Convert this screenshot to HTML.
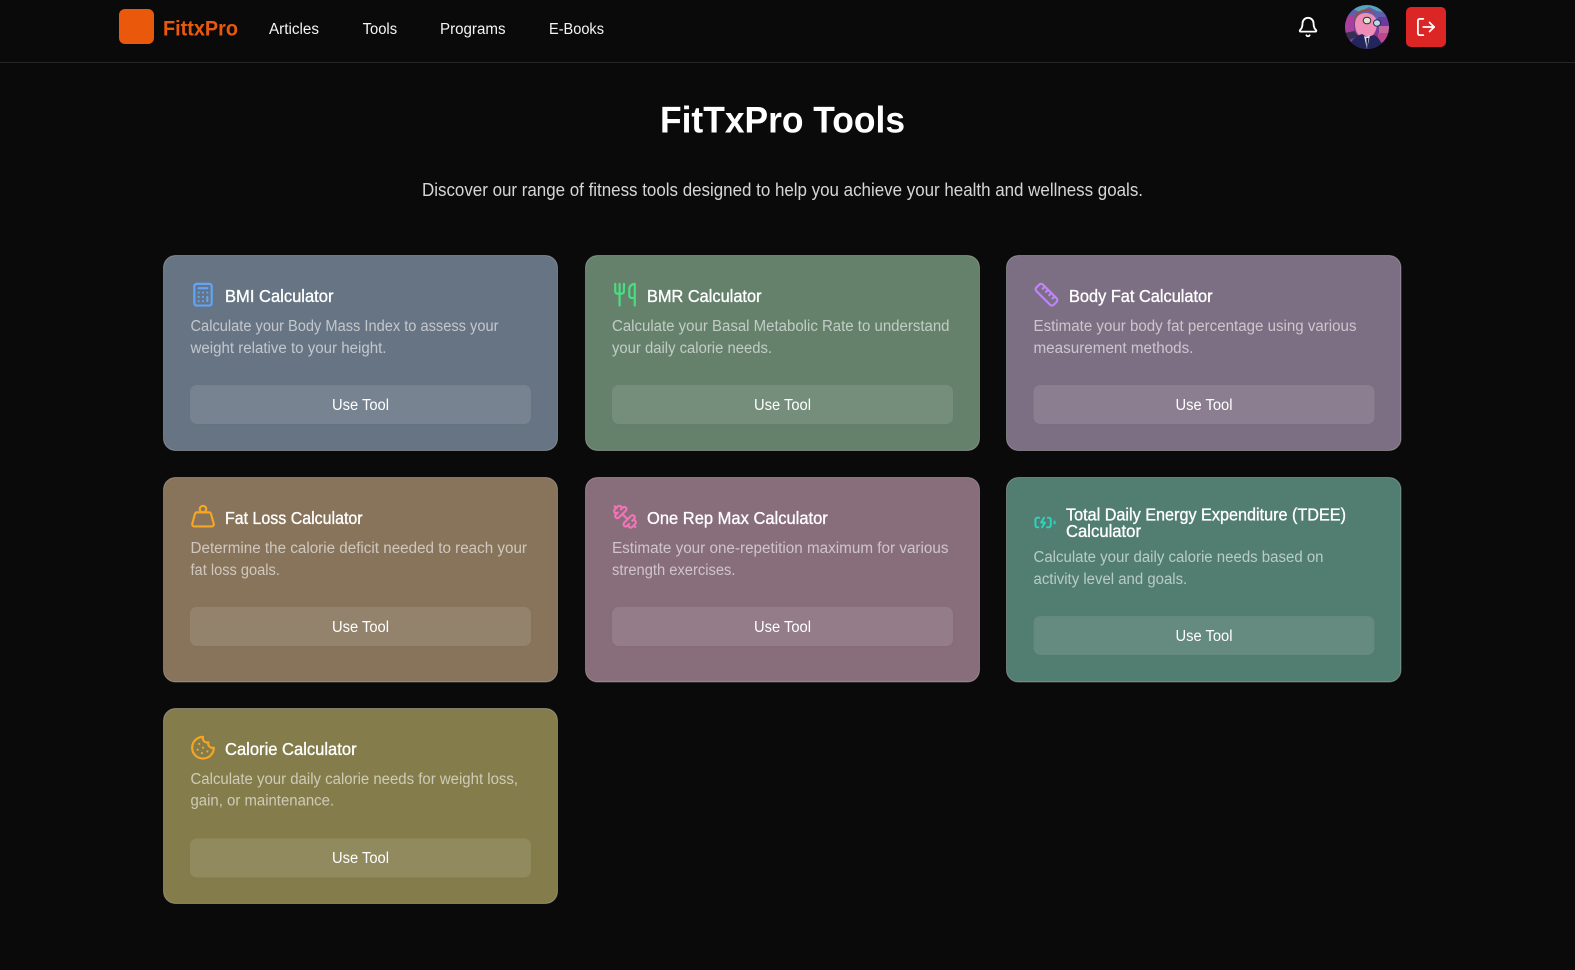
<!DOCTYPE html>
<html lang="en"><head><meta charset="utf-8"><title>FitTxPro Tools</title>
<style>
html,body{margin:0;padding:0;background:#0a0a0a;width:1575px;height:970px;overflow:hidden}
svg{display:block}
text{font-family:"Liberation Sans",Arial,sans-serif;white-space:pre}
.n{font-size:15.5px;fill:#f4f4f4}
.t{font-size:17.5px;fill:#fff;stroke:#fff;stroke-width:.35px}
.d{font-size:15.5px;fill:rgba(255,255,255,.6)}
.b{font-size:15.5px;fill:#fff;text-anchor:middle}
.c{stroke:rgba(255,255,255,.3);stroke-width:1}
.u{fill:rgba(255,255,255,.1)}
.i{fill:none;stroke-width:2;stroke-linecap:round;stroke-linejoin:round}
</style></head><body>
<svg width="1575" height="970" viewBox="0 0 1575 970" xmlns="http://www.w3.org/2000/svg">
<defs>
<filter id="s" x="-5%" y="-20%" width="110%" height="150%"><feDropShadow dx="0" dy="1.5" stdDeviation="1.5" flood-color="#000" flood-opacity=".18"/></filter>
<clipPath id="av"><circle cx="1367" cy="27" r="22"/></clipPath>
</defs>
<rect width="1575" height="970" fill="#0a0a0a"/>
<rect x="0" y="62" width="1575" height="1" fill="#262626"/>

<!-- nav -->
<rect x="119" y="9" width="35" height="35" rx="6" fill="#ea580c"/>
<text x="163" y="35.5" font-size="21" font-weight="700" fill="#ea580c" textLength="75" lengthAdjust="spacingAndGlyphs">FittxPro</text>
<text class="n" x="269" y="34" textLength="50" lengthAdjust="spacingAndGlyphs">Articles</text>
<text class="n" x="362.6" y="34" textLength="34.5" lengthAdjust="spacingAndGlyphs">Tools</text>
<text class="n" x="440" y="34" textLength="65.5" lengthAdjust="spacingAndGlyphs">Programs</text>
<text class="n" x="549" y="34" textLength="55" lengthAdjust="spacingAndGlyphs">E-Books</text>

<!-- bell -->
<g class="i" stroke="#fff" transform="translate(1297 16) scale(.92)">
<path d="M10.268 21a2 2 0 0 0 3.464 0"/>
<path d="M3.262 15.326A1 1 0 0 0 4 17h16a1 1 0 0 0 .74-1.673C19.41 13.956 18 12.499 18 8A6 6 0 0 0 6 8c0 4.499-1.411 5.956-2.738 7.326"/>
</g>

<!-- avatar -->
<g clip-path="url(#av)">
<rect x="1345" y="5" width="44" height="44" fill="#7d3b96"/>
<rect x="1345" y="5" width="44" height="11" fill="#52a6bd"/>
<path d="M1345 13l8-4 7 3 9-5 8 4 12 2v6h-44z" fill="#5f5fb0"/>
<rect x="1345" y="16" width="9" height="17" fill="#a93f9c"/>
<rect x="1378" y="17" width="11" height="9" fill="#6a3aa0"/>
<rect x="1379" y="26" width="10" height="7" fill="#c5679f"/>
<rect x="1378" y="33" width="11" height="9" fill="#c04590"/>
<path d="M1345 33l9-2 4 5-13 6z" fill="#35304f"/>
<path d="M1355 24c0-6 4-11 10.500-11s11.500 4 11.500 10c0 8-4 15-11 15s-11-6-11-14z" fill="#ef8db6"/>
<path d="M1354 23c-.5-8 5-13.500 11.500-13.500 5 0 9 2.500 11 7-2.500-3.500-6.500-5.500-11-5.300-5.500.2-9.800 4.800-11.500 11.800z" fill="#a54a35"/>
<path d="M1349 50c1-9 6-14 13-16l5 3 7-2c5 2 8 8 9 15z" fill="#23265c"/>
<path d="M1364 36l3 13 3-14-3 2z" fill="#dfe0ea"/>
<path d="M1366.300 38l.7 11 1.500-11z" fill="#15163a"/>
<ellipse cx="1367" cy="20.500" rx="3.800" ry="3.300" fill="#e3e6c6" stroke="#2a2a50" stroke-width="1"/>
<ellipse cx="1377" cy="23" rx="3.500" ry="3.200" fill="#b7dce8" stroke="#2a2a50" stroke-width="1"/>
</g>

<!-- logout -->
<rect x="1406" y="7" width="40" height="40" rx="5" fill="#dc2626"/>
<g class="i" stroke="#fff" transform="translate(1415.200 16.200) scale(.9)">
<path d="M9 21H5a2 2 0 0 1-2-2V5a2 2 0 0 1 2-2h4"/><path d="m16 17 5-5-5-5"/><path d="M21 12H9"/>
</g>

<!-- heading -->
<text x="660" y="132.500" font-size="37" font-weight="700" fill="#fff" textLength="245" lengthAdjust="spacingAndGlyphs">FitTxPro Tools</text>
<text x="422" y="196" font-size="18" fill="#d6d6d6" textLength="721" lengthAdjust="spacingAndGlyphs">Discover our range of fitness tools designed to help you achieve your health and wellness goals.</text>

<!-- cards row 1 -->
<rect class="c" x="163.500" y="255.500" width="394" height="195" rx="12" fill="#677483"/>
<rect class="c" x="585.500" y="255.500" width="394" height="195" rx="12" fill="#65816c"/>
<rect class="c" x="1006.500" y="255.500" width="394.500" height="195" rx="12" fill="#7d6f83"/>
<!-- row 2 -->
<rect class="c" x="163.500" y="477.500" width="394" height="204.500" rx="12" fill="#88745b"/>
<rect class="c" x="585.500" y="477.500" width="394" height="204.500" rx="12" fill="#886d7b"/>
<rect class="c" x="1006.500" y="477.500" width="394.500" height="204.500" rx="12" fill="#527d71"/>
<!-- row 3 -->
<rect class="c" x="163.500" y="708.500" width="394" height="195" rx="12" fill="#847d4b"/>

<!-- buttons -->
<g filter="url(#s)">
<rect class="u" x="190" y="385" width="341" height="39" rx="7"/>
<rect class="u" x="612" y="385" width="341" height="39" rx="7"/>
<rect class="u" x="1033.500" y="385" width="341" height="39" rx="7"/>
<rect class="u" x="190" y="607" width="341" height="39" rx="7"/>
<rect class="u" x="612" y="607" width="341" height="39" rx="7"/>
<rect class="u" x="1033.500" y="616" width="341" height="39" rx="7"/>
<rect class="u" x="190" y="838.500" width="341" height="39" rx="7"/>
</g>
<text class="b" x="360.500" y="410" textLength="57" lengthAdjust="spacingAndGlyphs">Use Tool</text>
<text class="b" x="782.500" y="410" textLength="57" lengthAdjust="spacingAndGlyphs">Use Tool</text>
<text class="b" x="1204" y="410" textLength="57" lengthAdjust="spacingAndGlyphs">Use Tool</text>
<text class="b" x="360.500" y="632" textLength="57" lengthAdjust="spacingAndGlyphs">Use Tool</text>
<text class="b" x="782.500" y="632" textLength="57" lengthAdjust="spacingAndGlyphs">Use Tool</text>
<text class="b" x="1204" y="641" textLength="57" lengthAdjust="spacingAndGlyphs">Use Tool</text>
<text class="b" x="360.500" y="863" textLength="57" lengthAdjust="spacingAndGlyphs">Use Tool</text>

<!-- titles -->
<text class="t" x="225" y="302" textLength="108.500" lengthAdjust="spacingAndGlyphs">BMI Calculator</text>
<text class="t" x="647" y="302" textLength="114.500" lengthAdjust="spacingAndGlyphs">BMR Calculator</text>
<text class="t" x="1069" y="302" textLength="143.600" lengthAdjust="spacingAndGlyphs">Body Fat Calculator</text>
<text class="t" x="225" y="524" textLength="137.600" lengthAdjust="spacingAndGlyphs">Fat Loss Calculator</text>
<text class="t" x="647" y="524" textLength="180.800" lengthAdjust="spacingAndGlyphs">One Rep Max Calculator</text>
<text class="t" x="1066" y="520.500" textLength="280" lengthAdjust="spacingAndGlyphs">Total Daily Energy Expenditure (TDEE)</text>
<text class="t" x="1066" y="537" textLength="75" lengthAdjust="spacingAndGlyphs">Calculator</text>
<text class="t" x="225" y="755" textLength="131.600" lengthAdjust="spacingAndGlyphs">Calorie Calculator</text>

<!-- descriptions -->
<text class="d" x="190.500" y="331" textLength="308" lengthAdjust="spacingAndGlyphs">Calculate your Body Mass Index to assess your</text>
<text class="d" x="190.500" y="353" textLength="196" lengthAdjust="spacingAndGlyphs">weight relative to your height.</text>
<text class="d" x="612" y="331" textLength="337.500" lengthAdjust="spacingAndGlyphs">Calculate your Basal Metabolic Rate to understand</text>
<text class="d" x="612" y="353" textLength="160" lengthAdjust="spacingAndGlyphs">your daily calorie needs.</text>
<text class="d" x="1033.500" y="331" textLength="323" lengthAdjust="spacingAndGlyphs">Estimate your body fat percentage using various</text>
<text class="d" x="1033.500" y="353" textLength="160" lengthAdjust="spacingAndGlyphs">measurement methods.</text>
<text class="d" x="190.500" y="553" textLength="336.500" lengthAdjust="spacingAndGlyphs">Determine the calorie deficit needed to reach your</text>
<text class="d" x="190.500" y="575" textLength="89.400" lengthAdjust="spacingAndGlyphs">fat loss goals.</text>
<text class="d" x="612" y="553" textLength="336.500" lengthAdjust="spacingAndGlyphs">Estimate your one-repetition maximum for various</text>
<text class="d" x="612" y="575" textLength="123.500" lengthAdjust="spacingAndGlyphs">strength exercises.</text>
<text class="d" x="1033.500" y="562" textLength="290" lengthAdjust="spacingAndGlyphs">Calculate your daily calorie needs based on</text>
<text class="d" x="1033.500" y="584" textLength="153.700" lengthAdjust="spacingAndGlyphs">activity level and goals.</text>
<text class="d" x="190.500" y="784" textLength="327.500" lengthAdjust="spacingAndGlyphs">Calculate your daily calorie needs for weight loss,</text>
<text class="d" x="190.500" y="805.500" textLength="143.600" lengthAdjust="spacingAndGlyphs">gain, or maintenance.</text>

<!-- icon: calculator -->
<g class="i" stroke="#60a5fa" transform="translate(190 281.700) scale(1.0833)">
<rect width="16" height="20" x="4" y="2" rx="2"/><path d="M8 6h8M16 14v4M16 10h.01M12 10h.01M8 10h.01M12 14h.01M8 14h.01M12 18h.01M8 18h.01"/>
</g>
<!-- icon: utensils -->
<g class="i" stroke="#4ade80" transform="translate(612 281.700) scale(1.0833)">
<path d="M3 2v7c0 1.100.9 2 2 2h4a2 2 0 0 0 2-2V2"/><path d="M7 2v20"/><path d="M21 15V2a5 5 0 0 0-5 5v6c0 1.100.9 2 2 2h3Zm0 0v7"/>
</g>
<!-- icon: ruler -->
<g class="i" stroke="#c084fc" transform="translate(1033.500 281.700) scale(1.0833)">
<path d="M21.300 15.300a2.400 2.400 0 0 1 0 3.400l-2.600 2.600a2.400 2.400 0 0 1-3.400 0L2.700 8.700a2.410 2.410 0 0 1 0-3.400l2.600-2.600a2.410 2.410 0 0 1 3.400 0Z"/><path d="m14.500 12.500 2-2"/><path d="m11.500 9.500 2-2"/><path d="m8.500 6.500 2-2"/><path d="m17.500 15.500 2-2"/>
</g>
<!-- icon: weight -->
<g class="i" stroke="#f5a623" transform="translate(190 503.700) scale(1.0833)">
<circle cx="12" cy="5" r="3"/><path d="M6.500 8a2 2 0 0 0-1.905 1.460L2.100 18.500A2 2 0 0 0 4 21h16a2 2 0 0 0 1.925-2.540L19.400 9.500A2 2 0 0 0 17.480 8Z"/>
</g>
<!-- icon: dumbbell (mirrored) -->
<g class="i" stroke="#f472b6" transform="translate(638 503.700) scale(-1.0833 1.0833)">
<path d="M17.596 12.768a2 2 0 1 0 2.829-2.829l-1.768-1.767a2 2 0 0 0 2.828-2.829l-2.828-2.828a2 2 0 0 0-2.829 2.828l-1.767-1.768a2 2 0 1 0-2.829 2.829z"/><path d="m2.500 21.500 1.400-1.400"/><path d="m20.100 3.900 1.400-1.400"/><path d="M5.343 21.485a2 2 0 1 0 2.829-2.828l1.767 1.768a2 2 0 1 0 2.829-2.829l-6.364-6.364a2 2 0 1 0-2.829 2.829l1.768 1.767a2 2 0 0 0-2.828 2.829z"/><path d="m9.600 14.400 4.800-4.800"/>
</g>
<!-- icon: battery charging -->
<g class="i" stroke="#2dd4bf" transform="translate(1033.500 511) scale(.958)">
<path d="M15 7h1a2 2 0 0 1 2 2v6a2 2 0 0 1-2 2h-2"/><path d="M6 7H4a2 2 0 0 0-2 2v6a2 2 0 0 0 2 2h1"/><path d="m11 7-3 5h4l-3 5"/><path d="M22 11v2"/>
</g>
<!-- icon: cookie -->
<g class="i" stroke="#f5a623" transform="translate(190 734.700) scale(1.0833)">
<path d="M12 2a10 10 0 1 0 10 10 4 4 0 0 1-5-5 4 4 0 0 1-5-5"/><path d="M8.500 8.500v.01"/><path d="M16 15.500v.01"/><path d="M12 12v.01"/><path d="M11 17v.01"/><path d="M7 14v.01"/>
</g>
</svg>
</body></html>
